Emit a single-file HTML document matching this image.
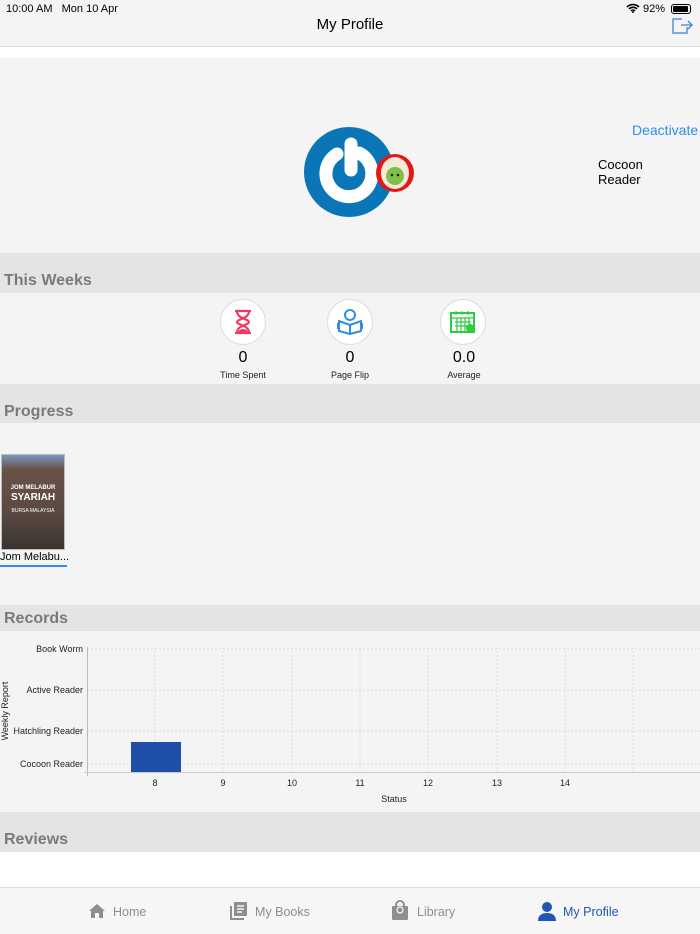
<!DOCTYPE html>
<html><head><meta charset="utf-8"><style>
*{margin:0;padding:0;box-sizing:border-box}
body{width:700px;height:934px;overflow:hidden;background:#f4f4f4;font-family:"Liberation Sans",sans-serif;position:relative;color:#000}
.a{position:absolute}
.hdr{position:absolute;left:0;width:700px;background:#e4e4e4;color:#7a7a7a;font-size:16px;font-weight:bold;padding-left:4px}
.circ{position:absolute;width:46px;height:46px;border-radius:50%;background:#fff;border:1px solid #ddd}
.num{position:absolute;font-size:16px;width:80px;text-align:center}
.lbl{position:absolute;font-size:9px;width:80px;text-align:center;color:#222}
.tab{position:absolute;top:905px;font-size:12.5px;color:#8e8e8e}
</style></head><body>
<div class="a" style="left:0;top:16px;width:700px;text-align:center;font-size:15px">My Profile</div>
<div class="a" style="left:0;top:0;width:700px;height:17px;background:#f4f4f4"></div>
<div class="a" style="left:6px;top:3px;font-size:11px">10:00 AM&nbsp;&nbsp; Mon 10 Apr</div>
<div class="a" style="left:626px;top:3px;font-size:11px">
<svg width="14" height="10" viewBox="0 0 14 10" style="vertical-align:-1px"><path d="M1 4a8.5 8.5 0 0 1 12 0M3 6a5.5 5.5 0 0 1 8 0M5 8a2.5 2.5 0 0 1 4 0" stroke="#000" stroke-width="1.6" fill="none"/><circle cx="7" cy="9" r="1" fill="#000"/></svg> 92%</div>
<div class="a" style="left:671px;top:4px;width:20px;height:10px;border:1px solid #000;border-radius:3px;padding:1px"><div style="width:15px;height:6px;background:#000;border-radius:1px"></div></div>
<div class="a" style="left:0;top:46px;width:700px;height:1px;background:#d8d8d8"></div>
<div class="a" style="left:0;top:47px;width:700px;height:11px;background:#fff"></div>
<svg class="a" style="left:670px;top:17px" width="24" height="18" viewBox="0 0 24 18"><path d="M12 2H3v14h14v-6M11 8h11M18 4l4 4-4 4" stroke="#3b82e0" stroke-width="1.3" fill="none"/></svg>

<svg class="a" style="left:304px;top:126px" width="112" height="94" viewBox="0 0 112 94">
<circle cx="45" cy="46" r="45" fill="#0a76b8"/>
<path d="M33 28a23 23 0 1 0 22 -1" stroke="#fff" stroke-width="13" fill="none" stroke-linecap="round"/>
<path d="M47 18v26" stroke="#fff" stroke-width="13" stroke-linecap="round"/>
<circle cx="91" cy="47" r="19" fill="#e51616"/>
<ellipse cx="91" cy="47" rx="14" ry="16" fill="#f3ead8"/>
<circle cx="91" cy="50" r="9" fill="#7fbf4a"/>
<circle cx="88" cy="49" r="1.3" fill="#222"/><circle cx="94" cy="49" r="1.3" fill="#222"/>
</svg>
<div class="a" style="left:632px;top:122px;font-size:14px;color:#2d8ef0">Deactivate</div>
<div class="a" style="left:598px;top:157px;font-size:13px;line-height:15px">Cocoon<br>Reader</div>

<div class="hdr" style="top:253px;height:40px;line-height:56px">This Weeks</div>
<div class="circ" style="left:220px;top:299px"></div>
<svg class="a" style="left:233px;top:309px" width="20" height="26" viewBox="0 0 20 26"><path d="M2 2h16M2 24h16M4 2c0 8 12 8 12 11s-12 3-12 11M16 2c0 8-12 8-12 11s12 3 12 11" stroke="#ef3a63" stroke-width="2.2" fill="none"/><path d="M5 23c2-4 8-4 10 0z" fill="#ef3a63"/></svg>
<div class="circ" style="left:327px;top:299px"></div>
<svg class="a" style="left:336px;top:307px" width="28" height="28" viewBox="0 0 28 28"><circle cx="14" cy="8" r="5" stroke="#2f8de4" stroke-width="2" fill="none"/><path d="M3 14l11 4 11-4v10l-11 3-11-3zM14 18v9M3 17h-1v4h1M25 17h1v4h-1" stroke="#2f8de4" stroke-width="2" fill="none"/></svg>
<div class="circ" style="left:440px;top:299px"></div>
<svg class="a" style="left:450px;top:310px" width="26" height="24" viewBox="0 0 26 24"><rect x="1" y="3" width="23" height="19" stroke="#2ecc40" stroke-width="2" fill="none"/><path d="M1 8h23M5 12h16M5 16h16M7 8v13M11 8v13M15 8v13M19 8v13M6 1v4M12 1v4M18 1v4" stroke="#2ecc40" stroke-width="1.2"/><circle cx="20" cy="18" r="4" fill="#2ecc40"/></svg>
<div class="num" style="left:203px;top:349px">0</div><div class="lbl" style="left:203px;top:370px">Time Spent</div>
<div class="num" style="left:310px;top:349px">0</div><div class="lbl" style="left:310px;top:370px">Page Flip</div>
<div class="num" style="left:424px;top:349px">0.0</div><div class="lbl" style="left:424px;top:370px">Average</div>

<div class="hdr" style="top:384px;height:39px;line-height:56px">Progress</div>
<div class="a" style="left:1px;top:454px;width:64px;height:96px;background:linear-gradient(#7c97bf 0%,#6a5248 15%,#5a4a42 60%,#3a3430 100%);border:1px solid #bbb">
<div style="position:absolute;top:30px;width:100%;text-align:center;color:#fff;font-size:6px;font-weight:bold">JOM MELABUR</div>
<div style="position:absolute;top:37px;width:100%;text-align:center;color:#fff;font-size:10px;font-weight:bold">SYARIAH</div>
<div style="position:absolute;top:53px;width:100%;text-align:center;color:#fff;font-size:5px">BURSA MALAYSIA</div></div>
<div class="a" style="left:0;top:551px;font-size:11px">Jom Melabu...</div>
<div class="a" style="left:0;top:565px;width:67px;height:2px;background:#2d8ef0"></div>

<div class="hdr" style="top:605px;height:26px;line-height:28px">Records</div>
<svg class="a" style="left:0;top:631px" width="700" height="181" viewBox="0 631 700 181" font-family="Liberation Sans" font-size="9">
<g stroke="#ddd" stroke-dasharray="2,2">
<line x1="87" x2="700" y1="649" y2="649"/><line x1="87" x2="700" y1="690" y2="690"/><line x1="87" x2="700" y1="731" y2="731"/><line x1="87" x2="700" y1="764" y2="764"/>
<line x1="155" x2="155" y1="647" y2="772"/><line x1="223" x2="223" y1="647" y2="772"/><line x1="292" x2="292" y1="647" y2="772"/><line x1="360" x2="360" y1="647" y2="772"/><line x1="428" x2="428" y1="647" y2="772"/><line x1="497" x2="497" y1="647" y2="772"/><line x1="565" x2="565" y1="647" y2="772"/><line x1="633" x2="633" y1="647" y2="772"/>
</g>
<line x1="87.5" x2="87.5" y1="647" y2="776" stroke="#bbb"/><line x1="84" x2="700" y1="772.5" y2="772.5" stroke="#ccc"/>
<rect x="131" y="742" width="50" height="30" fill="#1f4ea8"/>
<g text-anchor="end" fill="#222"><text x="83" y="652">Book Worm</text><text x="83" y="693">Active Reader</text><text x="83" y="734">Hatchling Reader</text><text x="83" y="767">Cocoon Reader</text></g>
<g text-anchor="middle" fill="#222"><text x="155" y="786">8</text><text x="223" y="786">9</text><text x="292" y="786">10</text><text x="360" y="786">11</text><text x="428" y="786">12</text><text x="497" y="786">13</text><text x="565" y="786">14</text><text x="394" y="802">Status</text></g>
<text transform="translate(8,711) rotate(-90)" text-anchor="middle" fill="#222">Weekly Report</text>
</svg>

<div class="hdr" style="top:812px;height:40px;line-height:56px">Reviews</div>
<div class="a" style="left:0;top:852px;width:700px;height:35px;background:#fff"></div>
<div class="a" style="left:0;top:887px;width:700px;height:47px;background:#f6f6f6;border-top:1px solid #ddd"></div>
<svg class="a" style="left:88px;top:903px" width="18" height="16" viewBox="0 0 18 16"><path d="M9 1L1 8h2v7h4v-5h4v5h4V8h2z" fill="#8e8e8e"/></svg>
<div class="tab" style="left:113px">Home</div>
<svg class="a" style="left:229px;top:901px" width="20" height="20" viewBox="0 0 20 20"><path d="M2 5v13h13" stroke="#8e8e8e" stroke-width="2" fill="none"/><rect x="5" y="1" width="13" height="14" fill="#8e8e8e"/><path d="M8 5h7M8 8h7M8 11h5" stroke="#f6f6f6" stroke-width="1.5"/></svg>
<div class="tab" style="left:255px">My Books</div>
<svg class="a" style="left:391px;top:900px" width="18" height="20" viewBox="0 0 18 20"><rect x="1" y="6" width="16" height="14" rx="1" fill="#8e8e8e"/><path d="M5 8V5a4 4 0 0 1 8 0v3" stroke="#8e8e8e" stroke-width="2" fill="none"/><circle cx="9" cy="10" r="3" stroke="#f6f6f6" stroke-width="1.3" fill="none"/></svg>
<div class="tab" style="left:417px">Library</div>
<svg class="a" style="left:537px;top:901px" width="20" height="20" viewBox="0 0 20 20"><circle cx="10" cy="6" r="5" fill="#1f55b5"/><path d="M1 20c0-6 4-8 9-8s9 2 9 8z" fill="#1f55b5"/></svg>
<div class="tab" style="left:563px;color:#1f55b5">My Profile</div>
</body></html>
